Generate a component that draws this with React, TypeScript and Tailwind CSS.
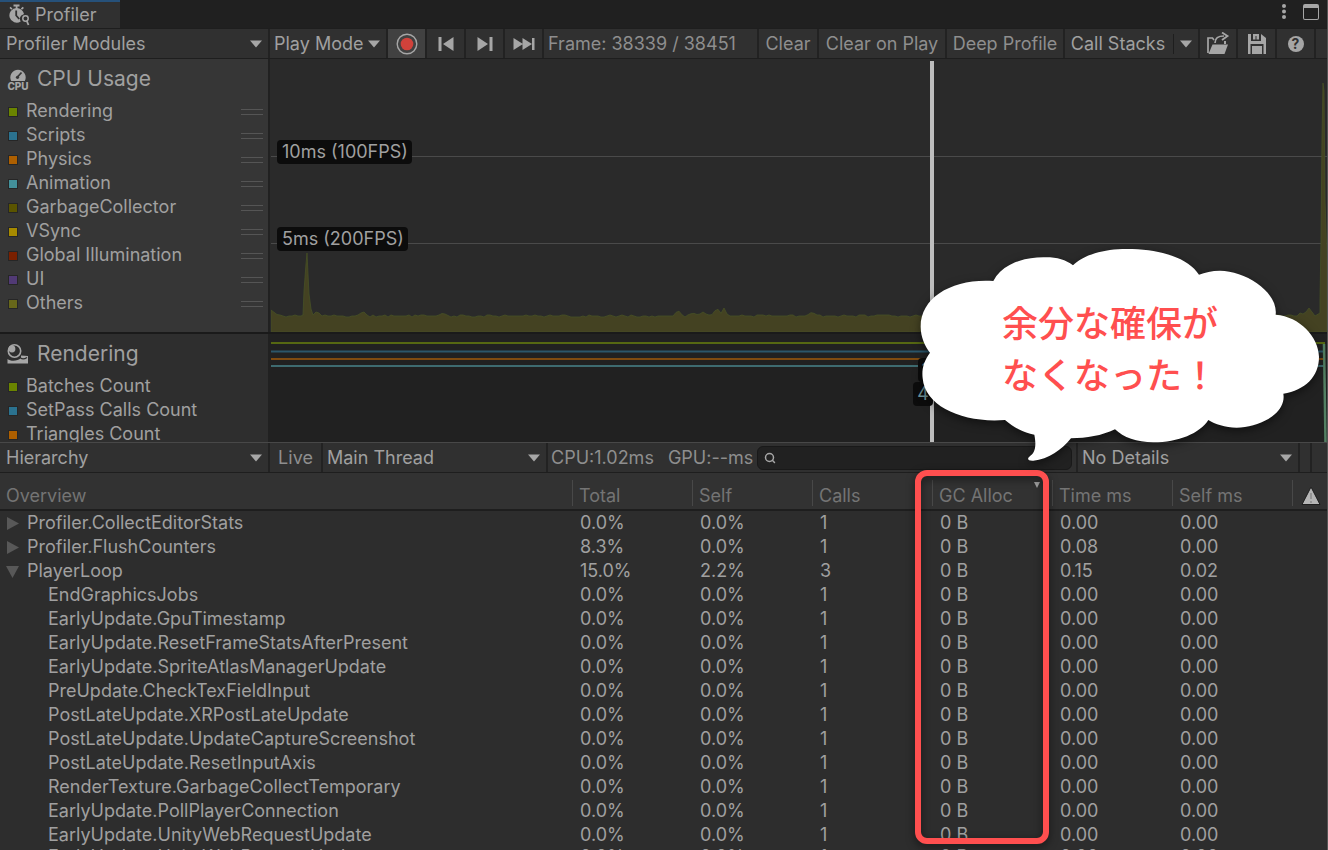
import { Search } from 'lucide-react';
import type { ReactNode } from 'react';

interface Series {
  name: string;
  color: string;
}

interface Sample {
  name: string;
  depth: number;
  state?: 'open' | 'closed';
  total: string;
  self: string;
  calls: string;
  time: string;
  selfMs: string;
}

const cpuSeries: Series[] = [
  { name: 'Rendering', color: 'bg-[#6a8400]' },
  { name: 'Scripts', color: 'bg-[#2b728f]' },
  { name: 'Physics', color: 'bg-[#ad5f00]' },
  { name: 'Animation', color: 'bg-[#43909a]' },
  { name: 'GarbageCollector', color: 'bg-[#5a5400]' },
  { name: 'VSync', color: 'bg-[#a68a00]' },
  { name: 'Global Illumination', color: 'bg-[#7a2000]' },
  { name: 'UI', color: 'bg-[#513a75]' },
  { name: 'Others', color: 'bg-[#67671a]' },
];

const renderingSeries: Series[] = [
  { name: 'Batches Count', color: 'bg-[#6a8400]' },
  { name: 'SetPass Calls Count', color: 'bg-[#2b728f]' },
  { name: 'Triangles Count', color: 'bg-[#ad5f00]' },
];

const leaf = (name: string): Sample => ({
  name,
  depth: 1,
  total: '0.0%',
  self: '0.0%',
  calls: '1',
  time: '0.00',
  selfMs: '0.00',
});

const samples: Sample[] = [
  { ...leaf('Profiler.CollectEditorStats'), depth: 0, state: 'closed' },
  { ...leaf('Profiler.FlushCounters'), depth: 0, state: 'closed', total: '8.3%', time: '0.08' },
  { name: 'PlayerLoop', depth: 0, state: 'open', total: '15.0%', self: '2.2%', calls: '3', time: '0.15', selfMs: '0.02' },
  leaf('EndGraphicsJobs'),
  leaf('EarlyUpdate.GpuTimestamp'),
  leaf('EarlyUpdate.ResetFrameStatsAfterPresent'),
  leaf('EarlyUpdate.SpriteAtlasManagerUpdate'),
  leaf('PreUpdate.CheckTexFieldInput'),
  leaf('PostLateUpdate.XRPostLateUpdate'),
  leaf('PostLateUpdate.UpdateCaptureScreenshot'),
  leaf('PostLateUpdate.ResetInputAxis'),
  leaf('RenderTexture.GarbageCollectTemporary'),
  leaf('EarlyUpdate.PollPlayerConnection'),
  leaf('EarlyUpdate.UnityWebRequestUpdate'),
];

const columns = ['Total', 'Self', 'Calls', 'GC Alloc', 'Time ms', 'Self ms'];

// Frame time spikes: [frame, height above the base line, half width]
const spikes = [
  [0, 6, 8],
  [46, 5, 5],
  [92, 5, 5],
  [172, 3, 6],
  [407, 6, 5],
  [422, 3, 8],
  [432, 4, 6],
  [446, 8, 6],
  [453, 8, 4],
  [541, 4, 6],
  [1030, 4, 4],
  [1038, 8, 6],
];

function framePath() {
  const points: string[] = [];
  let seed = 7;
  for (let x = 0; x <= 1046; x += 3) {
    seed = (seed * 1103 + 377) % 8191;
    if (x > 31 && x < 40) continue;
    let y = 257 + (seed % 4 === 0 ? -1 : seed % 5 === 0 ? 1 : 0);
    for (const [at, height, width] of spikes) {
      const distance = Math.abs(x - at);
      if (distance < width) y = Math.min(y, 257 - height * (1 - distance / width));
    }
    points.push(`${x} ${y}`);
    if (x === 30) points.push('32 256', '33 232', '35 205', '36 194', '37 215', '38 235', '40 250');
  }
  points.push('1049 254', '1049 240', '1050 180', '1051 78', '1052 24', '1053 32', '1054 140', '1056 200');
  return `M0 273L${points.join(' ')} 1056 273z`;
}

function Caret({ className = '' }: { className?: string }) {
  return (
    <svg viewBox="0 0 12 8" className={`pointer-events-none h-2 w-3 shrink-0 fill-[#a6a6a6] ${className}`} aria-hidden="true">
      <path d="M0 0.5h12L6 7.5z" />
    </svg>
  );
}

function ToolButton({ label, className = '', children }: { label?: string; className?: string; children: ReactNode }) {
  return (
    <button
      type="button"
      aria-label={label}
      className={`flex shrink-0 items-center justify-center border-r-2 border-[#222222] whitespace-nowrap ${className}`}
    >
      {children}
    </button>
  );
}

function Dropdown({ label, value, className = '' }: { label: string; value: string; className?: string }) {
  return (
    <label className={`grid shrink-0 items-center border-r-2 border-[#222222] pr-1.5 ${className}`}>
      <select aria-label={label} className="col-start-1 row-start-1 w-full appearance-none bg-transparent outline-none">
        <option>{value}</option>
      </select>
      <Caret className="col-start-1 row-start-1 justify-self-end" />
    </label>
  );
}

function Legend({ items, handles = false }: { items: Series[]; handles?: boolean }) {
  return (
    <ul>
      {items.map((item) => (
        <li key={item.name} className="flex h-6 items-center pr-[5px] pl-2">
          <span className={`mt-0.5 h-2.5 w-2.5 border border-[#262626] ${item.color}`} />
          <span className="flex-1 pl-2">{item.name}</span>
          {handles && <span className="mt-0.5 h-1.5 w-[22px] border-y border-[#555555]" />}
        </li>
      ))}
    </ul>
  );
}

function ProfilerIcon() {
  return (
    <svg viewBox="0 0 24 24" className="h-6 w-6" fill="#a6a6a6" aria-hidden="true">
      <path d="M5.500 1.500h6v2h-6zM7.700 3h1.800v3H7.700z" />
      <path d="M2.500 3.800 4.500 5.500 3.300 6.800 1.500 5zM14.700 3.800 12.800 5.500 14 6.800 16 5z" />
      <path d="M8.700 5a7.300 7.300 0 1 0 4 13.400 5 5 0 0 1 .6-6L16 11A7.300 7.300 0 0 0 8.700 5z" />
      <path d="M8.200 7.500v5l3 3.500" fill="none" stroke="#303030" strokeWidth="1.800" />
      <circle cx="17.500" cy="15.500" r="2.700" fill="none" stroke="#a6a6a6" strokeWidth="1.500" />
      <path d="m18.800 18 1.700 4" stroke="#a6a6a6" strokeWidth="1.800" />
    </svg>
  );
}

function CpuIcon() {
  return (
    <svg viewBox="0 0 22 23" className="h-[23px] w-[22px]" fill="#a6a6a6" aria-hidden="true">
      <path d="M4.200 13a7.700 7.700 0 1 1 13.600 0z" />
      <path d="m10.500 9 4-4.500" stroke="#363636" strokeWidth="1.800" />
      <circle cx="10.500" cy="9.300" r="1.600" fill="#363636" />
      <text x="11" y="22" textAnchor="middle" fontSize="10" fontWeight="800" fontFamily="Inter, sans-serif">
        CPU
      </text>
    </svg>
  );
}

function RenderingIcon() {
  return (
    <svg viewBox="0 0 22 22" className="h-[22px] w-[22px]" fill="#a6a6a6" aria-hidden="true">
      <circle cx="7.500" cy="8" r="6.200" fill="none" stroke="#a6a6a6" strokeWidth="1.600" />
      <circle cx="5" cy="6" r="3.400" />
      <path d="M0.500 16c3 2.500 10 2.500 13.500-1V12.500l7 .5v7.500H.5z" />
      <path d="M13.500 15c2 1.500 5 .5 6.500-.5" fill="none" stroke="#2e2e2e" strokeWidth="1.200" />
    </svg>
  );
}

function FrameChart() {
  return (
    <svg viewBox="0 0 1056 273" preserveAspectRatio="none" className="block h-full w-full" aria-label="CPU usage">
      <path d="M0 97.500H1056M0 184.500H1056" stroke="#4a4a4a" />
      <path d={framePath()} fill="#444222" stroke="#465026" strokeWidth="0.800" />
    </svg>
  );
}

function CounterChart() {
  return (
    <svg viewBox="0 0 1056 108" preserveAspectRatio="none" className="block h-full w-full" aria-label="Rendering counters" fill="none" strokeWidth="2">
      <path d="M0 9H1053V18" stroke="#566812" />
      <path d="M0 17.500H1054" stroke="#2b566a" />
      <path d="M0 25H1054" stroke="#7f4b10" />
      <path d="M0 32H1053" stroke="#3e6b70" />
      <path d="M1053 10L1054.500 108" stroke="#537f62" strokeWidth="2.500" />
    </svg>
  );
}

function Callout() {
  return (
    <div className="absolute top-[230px] -right-px h-[320px] w-[438px]">
      <svg viewBox="0 0 1314 960" className="h-full w-full drop-shadow-[0_3px_5px_rgba(0,0,0,0.5)]" aria-hidden="true">
        <path
          fill="#fff"
          d="M310 153C190 145 92 200 92 290C92 320 105 350 120 368C100 395 95 420 98 445C105 530 220 580 345 570C370 592 400 607 433 614C440 650 435 670 418 680C410 687 415 693 430 692C475 688 515 660 543 625C590 625 635 617 675 598C700 622 740 637 790 637C865 637 930 610 955 570C975 582 1005 593 1040 593C1110 592 1190 550 1180 491C1245 480 1287 440 1287 380C1285 320 1230 260 1157 254C1165 185 1065 122 990 122C965 122 945 127 927 134C895 85 815 57 710 57C640 57 580 75 549 106C525 88 500 81 460 82C395 82 335 105 310 153z"
        />
      </svg>
      <p className="absolute top-[65px] left-28 font-['Noto_Sans_CJK_JP',sans-serif] text-[36px] leading-[52px] font-medium whitespace-nowrap text-[#ff4f4f]">
        余分な確保が
        <br />
        なくなった！
      </p>
    </div>
  );
}

function SampleRow({ row, className = 'h-6' }: { row: Sample; className?: string }) {
  return (
    <tr className={`whitespace-nowrap ${className}`}>
      <td className="p-0">
        <div className={row.depth === 0 ? 'flex items-center pl-1.5' : 'pl-12'}>
          {row.state && (
            <button type="button" aria-label={`Toggle ${row.name}`} className="mr-2">
              <svg viewBox="0 0 13 13" className="h-[13px] w-[13px] fill-[#585858]">
                {row.state === 'open' ? <path d="M0 1h13L6.500 13z" /> : <path d="M1 0v13L13 6.500z" />}
              </svg>
            </button>
          )}
          {row.name}
        </div>
      </td>
      {[row.total, row.self, row.calls, '0 B', row.time, row.selfMs].map((value, i) => (
        <td key={columns[i]} className="p-0 pl-2">
          {value}
        </td>
      ))}
      <td />
    </tr>
  );
}

export default function App() {
  return (
    <div className="relative flex h-screen flex-col overflow-hidden border-r border-[#555555] bg-[#2d2d2d] font-[Inter,'Noto_Sans_CJK_JP',sans-serif] text-[18px] leading-6 text-[#a0a0a0]">
      {/* Window tab */}
      <header className="flex h-7 shrink-0 justify-between bg-[#202020]">
        <div className="flex w-[120px] items-center gap-[3px] border-t-2 border-[#26517a] bg-[#303030] pl-2">
          <ProfilerIcon />
          <h1>Profiler</h1>
        </div>
        <div className="flex items-start gap-4 pt-[3px] pr-2">
          <button type="button" aria-label="Window menu">
            <svg viewBox="0 0 6 18" className="h-[18px] w-1.5" fill="#a6a6a6">
              <circle cx="3" cy="3" r="2" />
              <circle cx="3" cy="8.500" r="2" />
              <circle cx="3" cy="14" r="2" />
            </svg>
          </button>
          <button type="button" aria-label="Maximize" className="mt-px h-4 w-4 rounded-xs border border-t-4 border-[#a6a6a6]" />
        </div>
      </header>

      {/* Main toolbar */}
      <div className="flex h-[31px] shrink-0 border-t border-b border-[#1e1e1e] bg-[#303030]">
        <Dropdown label="Profiler modules" value="Profiler Modules" className="w-[270px] pl-1.5" />
        <Dropdown label="Target" value="Play Mode" className="w-[118px] pl-1" />
        <ToolButton label="Record" className="w-[39px] bg-[#414141]">
          <svg viewBox="0 0 22 22" className="h-[22px] w-[22px]">
            <circle cx="11" cy="11" r="9.800" fill="none" stroke="#a6a6a6" strokeWidth="1.400" />
            <circle cx="11" cy="11" r="6.300" fill="#d0423b" />
          </svg>
        </ToolButton>
        <ToolButton label="Previous frame" className="w-[39px]">
          <svg viewBox="0 0 16 16" className="h-4 w-4" fill="#a6a6a6">
            <path d="M0.500 1h3v14h-3zM15.500 1v14L5 8z" />
          </svg>
        </ToolButton>
        <ToolButton label="Next frame" className="w-[39px]">
          <svg viewBox="0 0 16 16" className="h-4 w-4" fill="#a6a6a6">
            <path d="M12.500 1h3v14h-3zM0.500 1v14L11 8z" />
          </svg>
        </ToolButton>
        <ToolButton label="Current frame" className="w-[39px]">
          <svg viewBox="0 0 22 14" className="h-3.5 w-[22px]" fill="#a6a6a6">
            <path d="M0.500 1v12L10 7zM9.500 1v12L19 7zM19 1h2.500v12H19z" />
          </svg>
        </ToolButton>
        <div className="flex min-w-0 flex-1 items-center border-r-2 border-[#222222] pl-1 whitespace-nowrap text-[#8e8e8e]">
          Frame: 38339 / 38451
        </div>
        <ToolButton className="w-[60px] text-[#8e8e8e]">Clear</ToolButton>
        <ToolButton className="w-32 text-[#8e8e8e]">Clear on Play</ToolButton>
        <ToolButton className="w-[118px] text-[#8e8e8e]">Deep Profile</ToolButton>
        <ToolButton className="w-[135px] gap-2">
          Call Stacks
          <span className="flex h-5 items-center border-l border-[#1e1e1e] pl-1.5">
            <Caret />
          </span>
        </ToolButton>
        <ToolButton label="Load" className="w-[38px]">
          <svg viewBox="0 0 24 24" className="h-6 w-6" fill="#a6a6a6">
            <path d="M6.500 12.500H22L18.500 22H2.500z" />
            <path d="M2 21V6h4.500l1.500 2M9 11c0-5 3-7 9-7" fill="none" stroke="#a6a6a6" strokeWidth="1.700" />
            <path d="M16 .5 21.500 4 16 8" fill="none" stroke="#a6a6a6" strokeWidth="1.800" />
            <path d="M18 9v3h2V9z" />
          </svg>
        </ToolButton>
        <ToolButton label="Save" className="w-[39px]">
          <svg viewBox="0 0 20 22" className="h-[22px] w-5" fill="#a6a6a6">
            <path d="M1 1h3v7h10V1l5 4v16h-2.500V11h-13v10H1z" />
            <path d="M6 1h6v5.500H9.500V3h-1v3.500H6zM5 13h10v8H5z" />
          </svg>
        </ToolButton>
        <ToolButton label="Help" className="w-[39px]">
          <span className="flex h-4 w-4 items-center justify-center rounded-full bg-[#a6a6a6] text-sm leading-4 font-bold text-[#303030]">?</span>
        </ToolButton>
        <div className="w-[11px]" />
      </div>

      {/* Profiler modules */}
      <div className="flex h-[275px] shrink-0 border-b-2 border-[#1a1a1a]">
        <section className="w-[270px] border-r-2 border-[#212121] bg-[#363636]">
          <h2 className="flex h-10 items-center gap-2 pl-[7px] text-[21px]">
            <CpuIcon />
            CPU Usage
          </h2>
          <Legend items={cpuSeries} handles />
        </section>
        <div className="relative min-w-0 flex-1 bg-[#2a2a2a] pl-px">
          <FrameChart />
          <span className="absolute top-[81px] left-[7px] rounded-sm bg-[#0c0c0c] pr-1 pl-[5px]">10ms (100FPS)</span>
          <span className="absolute top-[168px] left-[7px] rounded-sm bg-[#0c0c0c] pr-1 pl-[5px]">5ms (200FPS)</span>
          <div className="absolute top-0.5 right-[393px] -bottom-0.5 w-1 bg-[#bdbdbd]" />
        </div>
      </div>
      <div className="flex h-[108px] shrink-0 overflow-hidden">
        <section className="w-[270px] border-r-2 border-[#212121] bg-[#2e2e2e]">
          <h2 className="flex h-10 items-center gap-2 pl-[7px] text-[21px]">
            <RenderingIcon />
            Rendering
          </h2>
          <Legend items={renderingSeries} />
        </section>
        <div className="relative min-w-0 flex-1 bg-[#212121] pl-px">
          <CounterChart />
          <div className="absolute top-0 right-[393px] bottom-0 w-1 bg-[#bdbdbd]" />
          <span className="absolute top-6 right-[394px] rounded-sm bg-[#0c0c0c] px-1 text-[#5f8a90]">1</span>
          <span className="absolute top-12 right-[394px] rounded-sm bg-[#0c0c0c] px-1 text-[#6d9298]">4</span>
        </div>
      </div>

      {/* Hierarchy toolbar */}
      <div className="flex h-[31px] shrink-0 border-t border-b border-t-[#484848] border-b-[#1e1e1e] bg-[#303030]">
        <Dropdown label="View" value="Hierarchy" className="w-[270px] pl-1.5" />
        <ToolButton className="w-[53px] text-[#8e8e8e]">Live</ToolButton>
        <Dropdown label="Thread" value="Main Thread" className="w-[225px] pl-1" />
        <div className="flex min-w-0 flex-1 items-center gap-1 pr-1 pl-[3px] whitespace-nowrap text-[#8e8e8e]">
          <span>CPU:1.02ms</span>
          <span className="pl-2.5">GPU:--ms</span>
          <label className="flex h-6 min-w-0 flex-1 items-center rounded-md border border-[#191919] bg-[#212121] pl-1.5">
            <Search className="h-3 w-3 shrink-0 text-[#a6a6a6]" strokeWidth={3} />
            <input type="search" aria-label="Search samples" className="min-w-0 flex-1 bg-transparent pl-1 outline-none" />
          </label>
        </div>
        <Dropdown label="Details" value="No Details" className="w-[224px] border-l-2 pl-1" />
        <div className="w-3 border-r-2 border-[#222222]" />
        <div className="w-[15px]" />
      </div>

      {/* Sample hierarchy */}
      <table className="w-full table-fixed border-collapse text-left">
        <colgroup>
          <col />
          <col className="w-30" />
          <col className="w-30" />
          <col className="w-30" />
          <col className="w-30" />
          <col className="w-30" />
          <col className="w-30" />
          <col className="w-[35px]" />
        </colgroup>
        <thead className="bg-[#323232] text-[#747474]">
          <tr className="h-[37px] border-b-2 border-[#1e1e1e]">
            <th className="pt-2.5 pl-1.5 font-normal">Overview</th>
            {columns.map((name) => (
              <th key={name} className="p-0 font-normal">
                <div className="relative mt-1 flex h-[26px] items-end border-l border-[#484848] pl-1.5 leading-5">
                  {name}
                  {name === 'GC Alloc' && (
                    <svg viewBox="0 0 6 6" className="absolute top-0.5 right-3 h-1.5 w-1.5 fill-[#a6a6a6]" aria-hidden="true">
                      <path d="M0 0h6L3 6z" />
                    </svg>
                  )}
                </div>
              </th>
            ))}
            <th className="p-0" aria-label="Warnings">
              <div className="mt-1 flex h-[26px] items-end border-l border-[#484848] pl-2">
                <svg viewBox="0 0 20 20" className="h-5 w-5" aria-hidden="true">
                  <path d="M10 1 1 18.500h18z" fill="#b5b5b5" stroke="#1e1e1e" />
                  <path d="M10 7v6M10 15v2" stroke="#8a8a8a" strokeWidth="1.500" />
                </svg>
              </div>
            </th>
          </tr>
        </thead>
        <tbody>
          {samples.map((row) => (
            <SampleRow key={row.name} row={row} />
          ))}
          <SampleRow row={leaf('EarlyUpdate.UnityWebRequestUpdate')} className="leading-5" />
        </tbody>
      </table>

      {/* Annotations */}
      <div className="pointer-events-none absolute top-[470px] right-[278px] h-[374px] w-[134px] rounded-xl border-6 border-[#ff4f4f] drop-shadow-[0_3px_4px_rgba(0,0,0,0.5)]" />
      <Callout />
    </div>
  );
}
